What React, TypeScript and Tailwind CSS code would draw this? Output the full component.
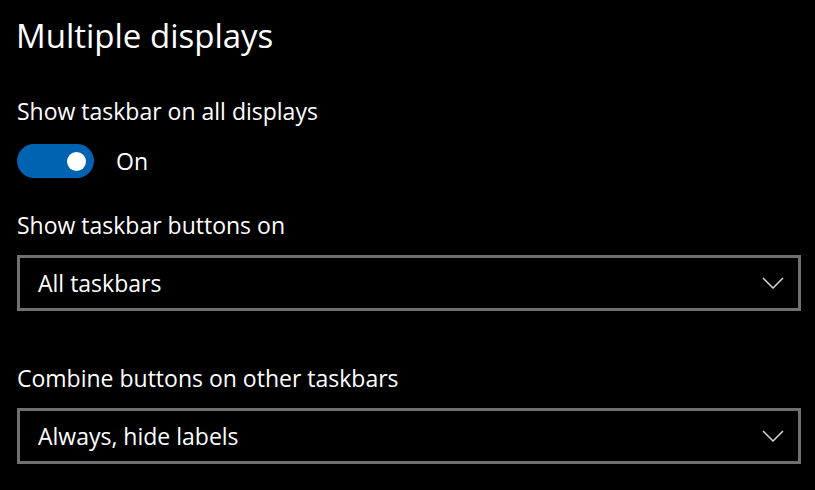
import { useState } from 'react'

function Chevron() {
  return (
    <svg width="22" height="12" viewBox="0 0 22 12" fill="none" className="shrink-0">
      <path d="M1 1l10 10L21 1" stroke="#d6d6d6" strokeWidth="1.5" />
    </svg>
  )
}

function Dropdown({ value }: { value: string }) {
  return (
    <div className="flex h-[56px] w-[784px] items-center justify-between border-[3px] border-[#707070] pl-[18px] pr-[14px]">
      <span className="text-[23px] leading-[32px]">{value}</span>
      <Chevron />
    </div>
  )
}

export default function App() {
  const [on, setOn] = useState(true)

  return (
    <div
      className="min-h-[490px] w-[815px] bg-black pl-[17px] pt-[16px] text-white"
      style={{ fontFamily: '"Open Sans", "Noto Sans", sans-serif' }}
    >
      <h1 className="-ml-px text-[33px] leading-[40px]">Multiple displays</h1>

      <p className="mt-[39px] text-[23px] leading-[32px]">Show taskbar on all displays</p>
      <div className="mt-[17px] flex h-[34px] items-center gap-[22px]">
        <button
          type="button"
          onClick={() => setOn(!on)}
          className={`flex h-[34px] w-[77px] items-center rounded-full px-[8px] ${
            on ? 'justify-end bg-[#0063b1]' : 'justify-start border-2 border-white'
          }`}
        >
          <span className="h-[19px] w-[19px] rounded-full bg-white" />
        </button>
        <span className="text-[23px] leading-[32px]">{on ? 'On' : 'Off'}</span>
      </div>

      <p className="mt-[31px] text-[23px] leading-[32px]">Show taskbar buttons on</p>
      <div className="mt-[14px]">
        <Dropdown value="All taskbars" />
      </div>

      <p className="mt-[51px] text-[23px] leading-[32px]">Combine buttons on other taskbars</p>
      <div className="mt-[14px]">
        <Dropdown value="Always, hide labels" />
      </div>
    </div>
  )
}
